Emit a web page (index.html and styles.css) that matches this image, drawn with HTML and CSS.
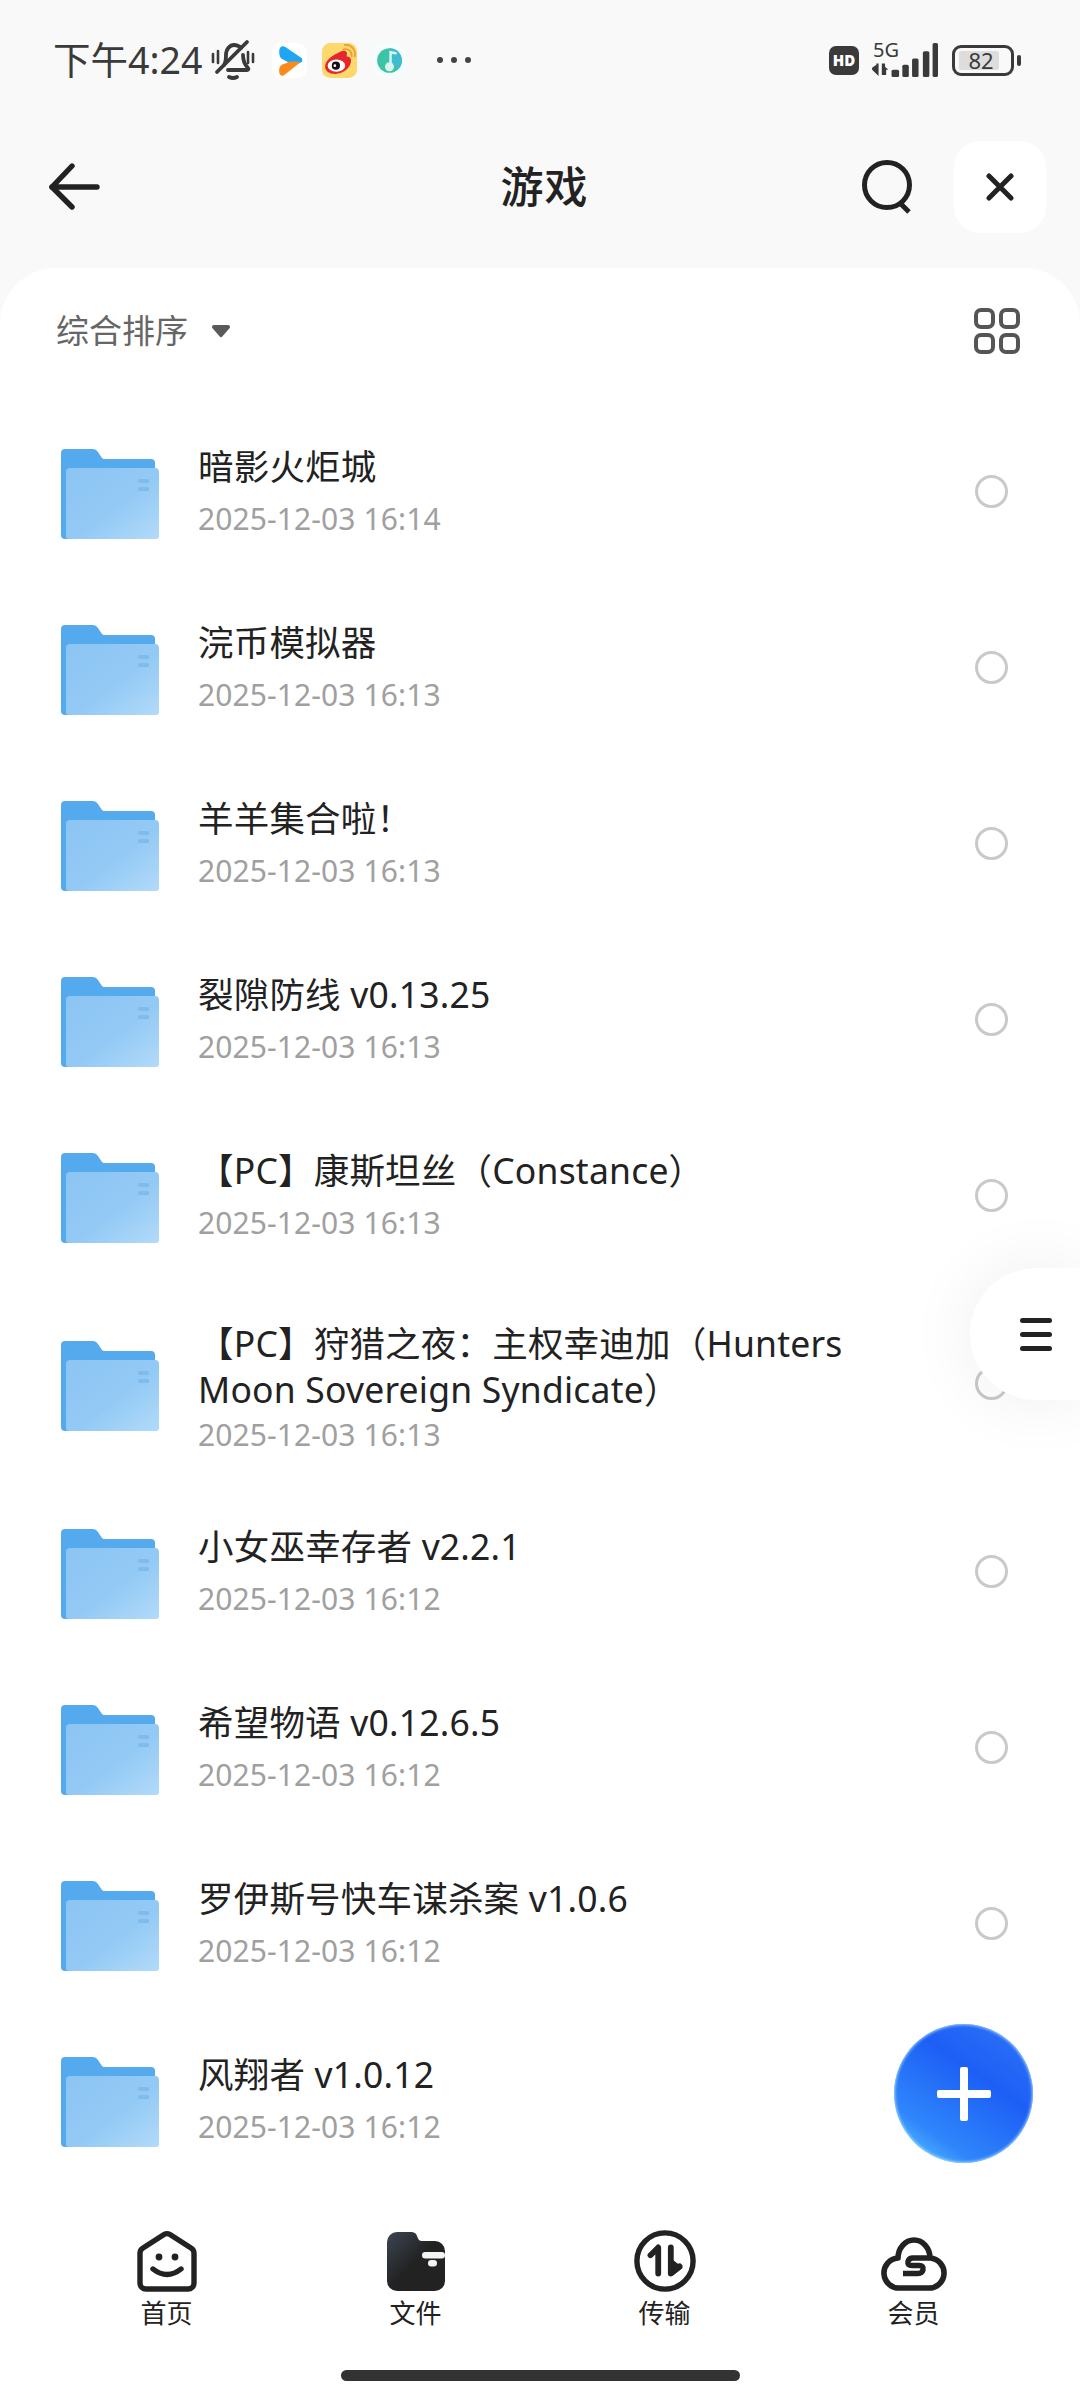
FILE: index.html
```html
<!DOCTYPE html>
<html lang="zh-CN">
<head>
    <meta charset="UTF-8">
    <meta name="viewport" content="width=device-width, initial-scale=1.0">
    <title>游戏</title>
    <link rel="stylesheet" href="styles.css">
</head>
<body>
    <svg class="defs" width="0" height="0">
        <defs>
            <linearGradient id="folderFront" x1="0" y1="0" x2="1" y2="1">
                <stop offset="0" stop-color="#8cc4f3"/>
                <stop offset="0.55" stop-color="#93caf5"/>
                <stop offset="1" stop-color="#b2daf9"/>
            </linearGradient>
            <linearGradient id="tabFolder" x1="0" y1="0" x2="1" y2="1">
                <stop offset="0" stop-color="#3d4654"/>
                <stop offset="0.5" stop-color="#222"/>
                <stop offset="1" stop-color="#222"/>
            </linearGradient>
            <symbol id="folder" viewBox="0 0 98 92">
                <path d="M4 1h28a6 6 0 0 1 5 3l4 6a3 3 0 0 0 2 1h47a4 4 0 0 1 4 4v70a6 6 0 0 1-6 6H4a4 4 0 0 1-4-4V5a4 4 0 0 1 4-4Z" fill="#55aaee"/>
                <path d="M9 20h85a4 4 0 0 1 4 4v64a3 3 0 0 1-3 3H8a3 3 0 0 1-3-3V24a4 4 0 0 1 4-4Z" fill="url(#folderFront)"/>
                <rect x="77" y="31" width="11" height="4" rx="1.5" fill="#7fbcec"/>
                <rect x="77" y="39" width="11" height="4" rx="1.5" fill="#7fbcec"/>
            </symbol>
        </defs>
    </svg>

    <div class="screen">
        <div class="status-bar">
            <div class="status-left">
                <span class="time">下午4:24</span>
                <svg class="mute" width="44" height="44" viewBox="0 0 44 44" fill="none" stroke="#3a3a3a" stroke-width="3.8" stroke-linecap="round" stroke-linejoin="round">
                    <path d="M13 27c2-3 2-6 2-10 0-6 4-10 8-10 3 0 5 1 7 3"/>
                    <path d="M32 17c0 5 1 9 5 13 1 1 0 2-1 2H17"/>
                    <path d="M6 34 36 4"/>
                    <path d="M18 39q4 2 8 0"/>
                    <path d="M2 16v8M7 13v12M37 14v11M42 16v8" stroke-width="2.6"/>
                </svg>
                <svg class="app-icon" width="35" height="35" viewBox="0 0 34 34">
                    <rect width="34" height="34" rx="9" fill="#fff"/>
                    <path d="M7 8c0-4 3-6 6-4l15 10c2 1 2 4 0 5l-2 1h-8L9 15c-1-1-2-3-2-7Z" fill="#1fa6f2"/>
                    <path d="M7 28c0-3 0-5 3-7l8-3h9l-1 2-14 11c-3 2-5 0-5-3Z" fill="#fa8a1c"/>
                </svg>
                <svg class="app-icon" width="35" height="35" viewBox="0 0 34 34" fill="none">
                    <rect width="34" height="34" rx="8" fill="#fdd86c"/>
                    <path d="M15 10c3-2 6-3 8-2 2 1 1 4 1 5 3 0 5 2 4 6-1 6-8 11-15 11-6 0-10-3-10-7 0-5 5-10 12-13Z" fill="#e6262d"/>
                    <ellipse cx="14" cy="22" rx="8.5" ry="6" fill="#fff"/>
                    <circle cx="13.5" cy="22" r="4" fill="#111"/>
                    <circle cx="12.5" cy="22" r="1.3" fill="#fff"/>
                    <path d="M21 6c4-1 8 2 8 7M22 2c6-1 11 4 10 11" stroke="#f09a2a" stroke-width="1.6" stroke-linecap="round"/>
                </svg>
                <svg class="app-icon" width="35" height="35" viewBox="0 0 34 34">
                    <rect width="34" height="34" rx="9" fill="#f6fbfb"/>
                    <circle cx="17" cy="17" r="12" fill="#3cc4a6"/>
                    <path d="M17 5a12 12 0 0 1 9 20L17 17Z" fill="#3fbcd0"/>
                    <circle cx="17" cy="23" r="4.4" fill="#d8f6ee"/>
                    <path d="M18 22V9l5 1" fill="none" stroke="#d8f6ee" stroke-width="2.4" stroke-linecap="round"/>
                </svg>
                <div class="dots"><i></i><i></i><i></i></div>
            </div>
            <div class="status-right">
                <span class="hd">HD</span>
                <div class="net">
                    <span class="net-label">5G</span>
                    <svg width="67" height="34" viewBox="0 0 62 33" preserveAspectRatio="none" fill="#3a3a3a">
                        <path d="M1 25l4-3v-1h2v12l-6-6Zm9-4h3v3l3 3h-2v5h-4Z" transform="translate(0 -1)"/>
                        <rect x="19" y="26" width="7" height="7" rx="1.5"/>
                        <rect x="29" y="21" width="6" height="12" rx="1.5"/>
                        <rect x="38" y="15" width="6" height="18" rx="1.5"/>
                        <rect x="48" y="8" width="6" height="25" rx="1.5"/>
                        <rect x="57" y="0" width="5" height="33" rx="1.5"/>
                    </svg>
                </div>
                <div class="battery">
                    <div class="battery-body">
                        <div class="battery-fill"></div>
                        <span class="battery-num">82</span>
                    </div>
                    <div class="battery-nub"></div>
                </div>
            </div>
        </div>

        <div class="header">
            <svg class="back" width="52" height="48" viewBox="0 0 52 48" fill="none" stroke="#222" stroke-width="5.4" stroke-linecap="round" stroke-linejoin="round">
                <path d="M23 3 3 24l20 20"/>
                <path d="M3 24h45"/>
            </svg>
            <h1 class="page-title">游戏</h1>
            <div class="header-actions">
                <svg width="52" height="54" viewBox="0 0 52 54" fill="none" stroke="#222" stroke-width="5">
                    <circle cx="25" cy="25" r="22.5"/>
                    <path d="M38 43l9 9"/>
                </svg>
                <button class="close-btn">
                    <svg width="28" height="28" viewBox="0 0 28 28" fill="none" stroke="#222" stroke-width="5" stroke-linecap="round">
                        <path d="M3 3l22 22M25 3 3 25"/>
                    </svg>
                </button>
            </div>
        </div>

        <div class="sheet">
            <div class="sort-bar">
                <div class="sort">
                    <span>综合排序</span>
                    <svg width="20" height="14" viewBox="0 0 20 14"><path d="M3 1h14a2 2 0 0 1 1.5 3.300l-7 8a2 2 0 0 1-3 0l-7-8A2 2 0 0 1 3 1Z" fill="#5a5a5a"/></svg>
                </div>
                <svg class="view-toggle" width="46" height="46" viewBox="0 0 46 46" fill="none" stroke="#555" stroke-width="4">
                    <rect x="2" y="2" width="17" height="17" rx="5"/>
                    <rect x="27" y="2" width="17" height="17" rx="5"/>
                    <rect x="2" y="27" width="17" height="17" rx="5"/>
                    <rect x="27" y="27" width="17" height="17" rx="5"/>
                </svg>
            </div>

            <ul class="file-list">
                <li class="file-row">
                    <svg class="folder"><use href="#folder"/></svg>
                    <div class="file-info"><div class="file-name">暗影火炬城</div><div class="file-date">2025-12-03 16:14</div></div>
                    <span class="radio"></span>
                </li>
                <li class="file-row">
                    <svg class="folder"><use href="#folder"/></svg>
                    <div class="file-info"><div class="file-name">浣币模拟器</div><div class="file-date">2025-12-03 16:13</div></div>
                    <span class="radio"></span>
                </li>
                <li class="file-row">
                    <svg class="folder"><use href="#folder"/></svg>
                    <div class="file-info"><div class="file-name">羊羊集合啦！</div><div class="file-date">2025-12-03 16:13</div></div>
                    <span class="radio"></span>
                </li>
                <li class="file-row">
                    <svg class="folder"><use href="#folder"/></svg>
                    <div class="file-info"><div class="file-name">裂隙防线 v0.13.25</div><div class="file-date">2025-12-03 16:13</div></div>
                    <span class="radio"></span>
                </li>
                <li class="file-row">
                    <svg class="folder"><use href="#folder"/></svg>
                    <div class="file-info"><div class="file-name">【PC】康斯坦丝（Constance）</div><div class="file-date">2025-12-03 16:13</div></div>
                    <span class="radio"></span>
                </li>
                <li class="file-row file-row-tall">
                    <svg class="folder"><use href="#folder"/></svg>
                    <div class="file-info"><div class="file-name">【PC】狩猎之夜：主权幸迪加（Hunters Moon Sovereign Syndicate）</div><div class="file-date">2025-12-03 16:13</div></div>
                    <span class="radio"></span>
                </li>
                <li class="file-row">
                    <svg class="folder"><use href="#folder"/></svg>
                    <div class="file-info"><div class="file-name">小女巫幸存者 v2.2.1</div><div class="file-date">2025-12-03 16:12</div></div>
                    <span class="radio"></span>
                </li>
                <li class="file-row">
                    <svg class="folder"><use href="#folder"/></svg>
                    <div class="file-info"><div class="file-name">希望物语 v0.12.6.5</div><div class="file-date">2025-12-03 16:12</div></div>
                    <span class="radio"></span>
                </li>
                <li class="file-row">
                    <svg class="folder"><use href="#folder"/></svg>
                    <div class="file-info"><div class="file-name">罗伊斯号快车谋杀案 v1.0.6</div><div class="file-date">2025-12-03 16:12</div></div>
                    <span class="radio"></span>
                </li>
                <li class="file-row">
                    <svg class="folder"><use href="#folder"/></svg>
                    <div class="file-info"><div class="file-name">风翔者 v1.0.12</div><div class="file-date">2025-12-03 16:12</div></div>
                    <span class="radio"></span>
                </li>
            </ul>

            <nav class="tabbar">
                <div class="tabs">
                    <div class="tab">
                        <svg width="64" height="62" viewBox="0 0 64 62" fill="none" stroke="#222" stroke-width="5.4" stroke-linecap="round" stroke-linejoin="round">
                            <path d="M29 4.500a6 6 0 0 1 6 0L56 18a6 6 0 0 1 3 5v30a6 6 0 0 1-6 6H11a6 6 0 0 1-6-6V23a6 6 0 0 1 3-5Z"/>
                            <path d="M18 39q14 11 28 0"/>
                            <circle cx="24" cy="27" r="3.400" fill="#222" stroke="none"/>
                            <circle cx="40" cy="27" r="3.400" fill="#222" stroke="none"/>
                        </svg>
                        <span>首页</span>
                    </div>
                    <div class="tab">
                        <svg width="62" height="62" viewBox="0 0 62 62">
                            <path d="M12 2h14c3 0 5 1 6 4 1 3 2 5 5 5h13a10 10 0 0 1 10 10v30a10 10 0 0 1-10 10H12A10 10 0 0 1 2 51V12A10 10 0 0 1 12 2Z" fill="url(#tabFolder)"/>
                            <rect x="37" y="22" width="23" height="6.500" rx="3.250" fill="#f4f4f4"/>
                            <rect x="43" y="30" width="9" height="6.500" rx="3.250" fill="#f4f4f4"/>
                        </svg>
                        <span>文件</span>
                    </div>
                    <div class="tab">
                        <svg width="64" height="64" viewBox="0 0 64 64" fill="none" stroke="#222" stroke-width="5.600" stroke-linecap="round" stroke-linejoin="round">
                            <circle cx="32" cy="32" r="29"/>
                            <path d="M17 26l8-8v27" stroke-width="6"/>
                            <path d="M38 18v27l9-7.500" stroke-width="6"/>
                            <path d="M40 32l9 7-9 7Z" fill="#222" stroke-width="2"/>
                        </svg>
                        <span>传输</span>
                    </div>
                    <div class="tab">
                        <svg width="68" height="62" viewBox="0 0 68 62" fill="none" stroke="#222" stroke-width="5.600" stroke-linejoin="round">
                            <path d="M20 58H48A15 15 0 0 0 50 28A16 18 0 0 0 18 28A15 15 0 0 0 20 58Z"/>
                            <path d="M49 28H33q-4 0-5 3.500-1 4 4 4h7q5 0 4 4.500-1 3.500-5 3.500H23" stroke-width="5.400"/>
                        </svg>
                        <span>会员</span>
                    </div>
                </div>
                <div class="home-bar"></div>
            </nav>
        </div>

        <button class="side-btn">
            <span></span><span></span><span></span>
        </button>
        <button class="fab">
            <svg width="54" height="54" viewBox="0 0 54 54" fill="#fff">
                <rect x="23" y="0" width="8" height="54" rx="2"/>
                <rect x="0" y="23" width="54" height="8" rx="2"/>
            </svg>
        </button>
    </div>
</body>
</html>
```

FILE: styles.css
```css
* {
    box-sizing: border-box;
}

body {
    margin: 0;
    background: #fff;
    font-family: 'Noto Sans', 'Noto Sans CJK SC', sans-serif;
}

.defs {
    position: absolute;
}

.screen {
    position: relative;
    display: flex;
    flex-direction: column;
    width: 1080px;
    height: 2400px;
    overflow: hidden;
    background: #f9f9f9;
}

svg {
    display: block;
    flex-shrink: 0;
}

/* Status bar */
.status-bar {
    display: flex;
    justify-content: space-between;
    align-items: center;
    height: 120px;
    padding: 0 59px 0 53px;
    color: #3a3a3a;
}

.status-left {
    display: flex;
    align-items: center;
}

.time {
    width: 158px;
    font-size: 37.500px;
    line-height: 44px;
}

.app-icon {
    margin-left: 15px;
}

.mute {
    margin-right: 2px;
}

.dots {
    display: flex;
    gap: 8px;
    margin-left: 30px;
}

.dots i {
    width: 6px;
    height: 6px;
    border-radius: 50%;
    background: #444;
}

.status-right {
    display: flex;
    align-items: center;
}

.hd {
    width: 30px;
    height: 29px;
    margin-right: 12px;
    border-radius: 7px;
    background: #3a3a3a;
    color: #fff;
    font-size: 15px;
    font-weight: 900;
    line-height: 29px;
    text-align: center;
}

.net {
    position: relative;
    width: 67px;
    height: 34px;
    margin-right: 14px;
}

.net-label {
    position: absolute;
    top: -3px;
    left: 2px;
    font-size: 20px;
    line-height: 20px;
}

.battery {
    display: flex;
    align-items: center;
    gap: 3px;
}

.battery-body {
    position: relative;
    width: 62px;
    height: 31px;
    border: 3px solid #3a3a3a;
    border-radius: 9px;
}

.battery-fill {
    position: absolute;
    top: 3px;
    left: 4px;
    width: 40px;
    height: 19px;
    border-radius: 2px;
    background: #ddd;
}

.battery-num {
    position: absolute;
    inset: 0;
    padding-right: 4px;
    font-size: 22px;
    line-height: 25px;
    text-align: center;
}

.battery-nub {
    width: 4px;
    height: 11px;
    border-radius: 2px;
    background: #3a3a3a;
}

/* Header */
.header {
    position: relative;
    display: flex;
    justify-content: space-between;
    align-items: center;
    height: 134px;
    padding: 0 34px 0 49px;
}

.page-title {
    margin: -6px 0 0 126px;
    color: #222;
    font-size: 43px;
    font-weight: 500;
    letter-spacing: 1px;
}

.header-actions {
    display: flex;
    align-items: center;
    gap: 40px;
}

.close-btn {
    display: flex;
    justify-content: center;
    align-items: center;
    width: 92px;
    height: 92px;
    padding: 0;
    border: none;
    border-radius: 26px;
    background: #fff;
}

/* Sheet */
.sheet {
    display: flex;
    flex-direction: column;
    flex: 1;
    margin-top: 14px;
    border-radius: 56px 56px 0 0;
    background: #fff;
}

.sort-bar {
    display: flex;
    justify-content: space-between;
    align-items: center;
    height: 124px;
    padding: 0 60px 0 56px;
}

.sort {
    display: flex;
    align-items: center;
    gap: 23px;
    margin-top: 2px;
    color: #666;
    font-size: 33px;
    line-height: 44px;
}

.view-toggle {
    margin-top: 2px;
}

.file-list {
    margin: 11px 0 0;
    padding: 0;
    list-style: none;
}

.file-row {
    display: flex;
    align-items: center;
    height: 176px;
    padding: 0 72px 0 61px;
}

.file-row-tall {
    height: 200px;
}

.folder {
    width: 98px;
    height: 92px;
    margin-top: 5px;
}

.file-info {
    flex: 1;
    padding: 3px 0 0 39px;
}

.file-row-tall .file-info {
    padding-top: 12px;
}

.file-name {
    width: 700px;
    color: #222;
    font-size: 35.500px;
    letter-spacing: 0.2px;
    line-height: 46px;
}

.file-date {
    margin-top: 7px;
    color: #a0a0a0;
    font-size: 30px;
    letter-spacing: 0.1px;
    line-height: 46px;
}

.file-row-tall .file-date {
    margin-top: 0;
}

.radio {
    width: 33px;
    height: 33px;
    border: 3px solid #c8c9cc;
    border-radius: 50%;
}

/* Bottom tabs */
.tabbar {
    padding-top: 43px;
}

.tabs {
    display: grid;
    grid-template-columns: repeat(4, 249px);
    padding: 0 42px;
}

.tab {
    display: flex;
    flex-direction: column;
    align-items: center;
    height: 101px;
    color: #222;
    font-size: 26px;
    line-height: 32px;
}

.tab svg {
    height: 62px;
    margin-bottom: 5px;
}

.home-bar {
    width: 399px;
    height: 11px;
    margin: 39px auto 0;
    border-radius: 6px;
    background: #333;
}

/* Floating buttons */
.side-btn {
    position: absolute;
    top: 1268px;
    right: 0;
    display: flex;
    flex-direction: column;
    justify-content: center;
    gap: 9px;
    width: 110px;
    height: 132px;
    padding: 0 0 0 50px;
    border: none;
    border-radius: 66px 0 0 66px;
    background: #fff;
    box-shadow: 0 0 70px rgba(0, 0, 0, 0.07);
}

.side-btn span {
    width: 32px;
    height: 5px;
    border-radius: 3px;
    background: #222;
}

.fab {
    position: absolute;
    top: 2024px;
    left: 894px;
    display: flex;
    justify-content: center;
    align-items: center;
    width: 139px;
    height: 139px;
    padding: 0;
    border: none;
    border-radius: 50%;
    background: linear-gradient(35deg, #62d4ff 0%, #2f86fb 24%, #1d5ff5 62%, #2f74f8 100%);
    box-shadow: inset 0 0 3px 1px rgba(190, 235, 255, 0.8);
}
```
